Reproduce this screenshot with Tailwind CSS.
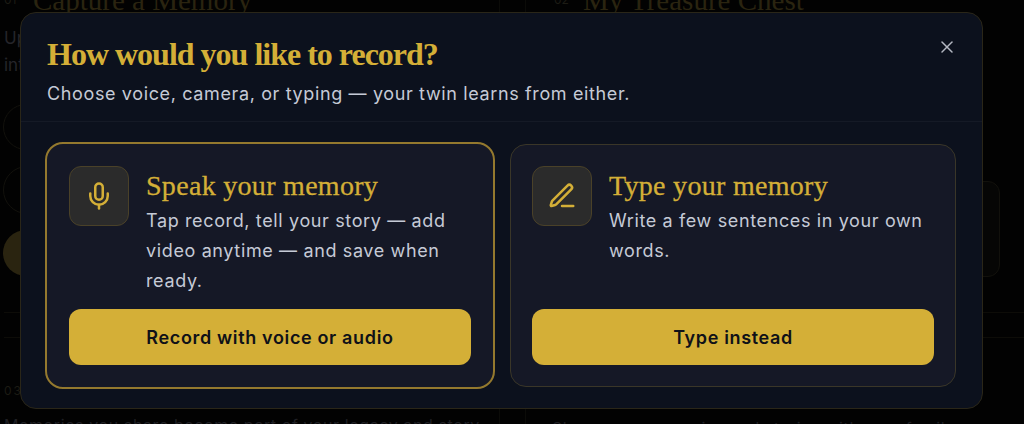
<!DOCTYPE html>
<html lang="en">
<head>
    <meta charset="UTF-8">
    <title>How would you like to record?</title>
    <script src="https://cdn.jsdelivr.net/npm/@tailwindcss/browser@4"></script>
</head>
<body class="bg-black font-['Inter',sans-serif] overflow-hidden">
<div class="relative w-[1024px] h-[424px] overflow-hidden bg-[#020202]">

    <!-- Dimmed page behind the dialog -->
    <div class="grid grid-cols-[500px_524px] h-full">
        <div class="border-r border-[#0b0b08] pl-[4px]">
            <div class="flex gap-[14px] -mt-[15px]">
                <span class="text-[12px] text-[#1c1b14] mt-[6px] w-[15px]">01</span>
                <span class="font-['Liberation_Serif',serif] text-[29px] leading-[30px] text-[#2a2410]">Capture a Memory</span>
            </div>
            <p class="text-[17px] leading-[27px] text-[#25252a] mt-[10px]">Up<br>int</p>
            <div class="w-[46px] h-[46px] rounded-full border border-[#12110c] -ml-px mt-[25px]"></div>
            <div class="w-[48px] h-[48px] rounded-full border border-[#12110c] -ml-px mt-[16px]"></div>
            <div class="w-[46px] h-[46px] rounded-full bg-[#2a2410] -ml-px mt-[16px]"></div>
            <div class="h-[26px] border-y border-[#0d0c08] mt-[36px]"></div>
            <div class="text-[12px] tracking-[2px] leading-[14px] text-[#1c1b14] mt-[46px]">03</div>
            <p class="text-[16px] leading-[20px] tracking-[0.6px] text-[#1f1f23] mt-[17px] whitespace-nowrap">Memories you share become part of your legacy and story</p>
        </div>
        <div class="relative pl-[50px] border-l border-[#0b0b08] ml-[25px]">
            <div class="flex gap-[14px] -mt-[15px] -ml-[22px]">
                <span class="text-[12px] text-[#1c1b14] mt-[6px] w-[15px]">02</span>
                <span class="font-['Liberation_Serif',serif] text-[29px] leading-[30px] text-[#2a2410]">My Treasure Chest</span>
            </div>
            <div class="absolute left-[440px] top-[181px] w-[34px] h-[96px] rounded-[12px] border border-[#12110c] bg-[#060605]"></div>
            <div class="absolute left-[440px] top-[312px] w-[60px] h-[26px] border-y border-[#0d0c08]"></div>
            <p class="absolute left-[26px] top-[418px] text-[16px] leading-[20px] tracking-[0.6px] text-[#1f1f23] whitespace-nowrap">Share your memories and stories with your family</p>
        </div>
    </div>

    <!-- Dialog -->
    <div class="absolute left-[20px] top-[12px] w-[963px] h-[397px] rounded-[16px] border border-[#2a2618] bg-[#0c111d] flex flex-col">
        <div class="relative h-[109px] border-b border-[#151a26] pl-[26px] pt-[22px]">
            <h2 class="font-['Liberation_Serif',serif] font-bold text-[32px] leading-[38px] tracking-[-1px] text-[#d4af37]">How would you like to record?</h2>
            <p class="text-[18px] leading-[28px] tracking-[0.63px] text-[#c5cad6] mt-[7px]">Choose voice, camera, or typing — your twin learns from either.</p>
            <button class="absolute right-[25px] top-[24px] text-[#b4b8c2]">
                <svg class="w-[20px] h-[20px]" viewBox="0 0 24 24" fill="none" stroke="currentColor" stroke-width="1.8" stroke-linecap="round"><path d="M18 6 6 18"/><path d="m6 6 12 12"/></svg>
            </button>
        </div>
        <div class="grid grid-cols-[450px_446px] gap-[15px] pl-[24px] pt-[20px]">
            <div class="h-[247px] rounded-[18px] border-2 border-[#94792e] bg-[#151826] pl-[22px] pr-[22px] pt-[22px] flex flex-col">
                <div class="flex gap-[17px] h-[143px]">
                    <div class="w-[60px] h-[60px] shrink-0 rounded-[12px] border border-[#4a4128] bg-[#2b2b2b] flex items-center justify-center text-[#d4af37]">
                        <svg class="w-[30px] h-[30px]" viewBox="0 0 24 24" fill="none" stroke="currentColor" stroke-width="2" stroke-linecap="round" stroke-linejoin="round"><path d="M12 2a3 3 0 0 0-3 3v7a3 3 0 0 0 6 0V5a3 3 0 0 0-3-3Z"/><path d="M19 10v2a7 7 0 0 1-14 0v-2"/><path d="M12 19v3"/></svg>
                    </div>
                    <div class="pt-[4px]">
                        <h3 class="font-['Liberation_Serif',serif] text-[28px] leading-[32px] tracking-[0.3px] [-webkit-text-stroke:0.3px_#d4af37] text-[#d4af37]">Speak your memory</h3>
                        <p class="text-[18px] leading-[30px] tracking-[0.63px] text-[#c5cad6] mt-[4px]">Tap record, tell your story — add video anytime — and save when ready.</p>
                    </div>
                </div>
                <button class="h-[56px] rounded-[12px] bg-[#d4af37] text-[18px] font-semibold tracking-[0.65px] text-[#0f1118]">Record with voice or audio</button>
            </div>
            <div class="h-[243px] mt-[2px] rounded-[16px] border border-[#3a3628] bg-[#151826] px-[21px] pt-[21px] flex flex-col">
                <div class="flex gap-[17px] h-[143px]">
                    <div class="w-[60px] h-[60px] shrink-0 rounded-[12px] border border-[#4a4128] bg-[#2b2b2b] flex items-center justify-center text-[#d4af37]">
                        <svg class="w-[30px] h-[30px]" viewBox="0 0 24 24" fill="none" stroke="currentColor" stroke-width="2" stroke-linecap="round" stroke-linejoin="round"><path d="M12 20h9"/><path d="M16.376 3.622a1 1 0 0 1 3.002 3.002L7.368 18.635a2 2 0 0 1-.855.506l-2.872.838a.5.5 0 0 1-.62-.62l.838-2.872a2 2 0 0 1 .506-.854z"/></svg>
                    </div>
                    <div class="pt-[4px]">
                        <h3 class="font-['Liberation_Serif',serif] text-[28px] leading-[32px] tracking-[0.3px] [-webkit-text-stroke:0.3px_#d4af37] text-[#d4af37]">Type your memory</h3>
                        <p class="text-[18px] leading-[30px] tracking-[0.63px] text-[#c5cad6] mt-[4px]">Write a few sentences in your own words.</p>
                    </div>
                </div>
                <button class="h-[56px] rounded-[12px] bg-[#d4af37] text-[18px] font-semibold tracking-[0.65px] text-[#0f1118]">Type instead</button>
            </div>
        </div>
    </div>
</div>
</body>
</html>
